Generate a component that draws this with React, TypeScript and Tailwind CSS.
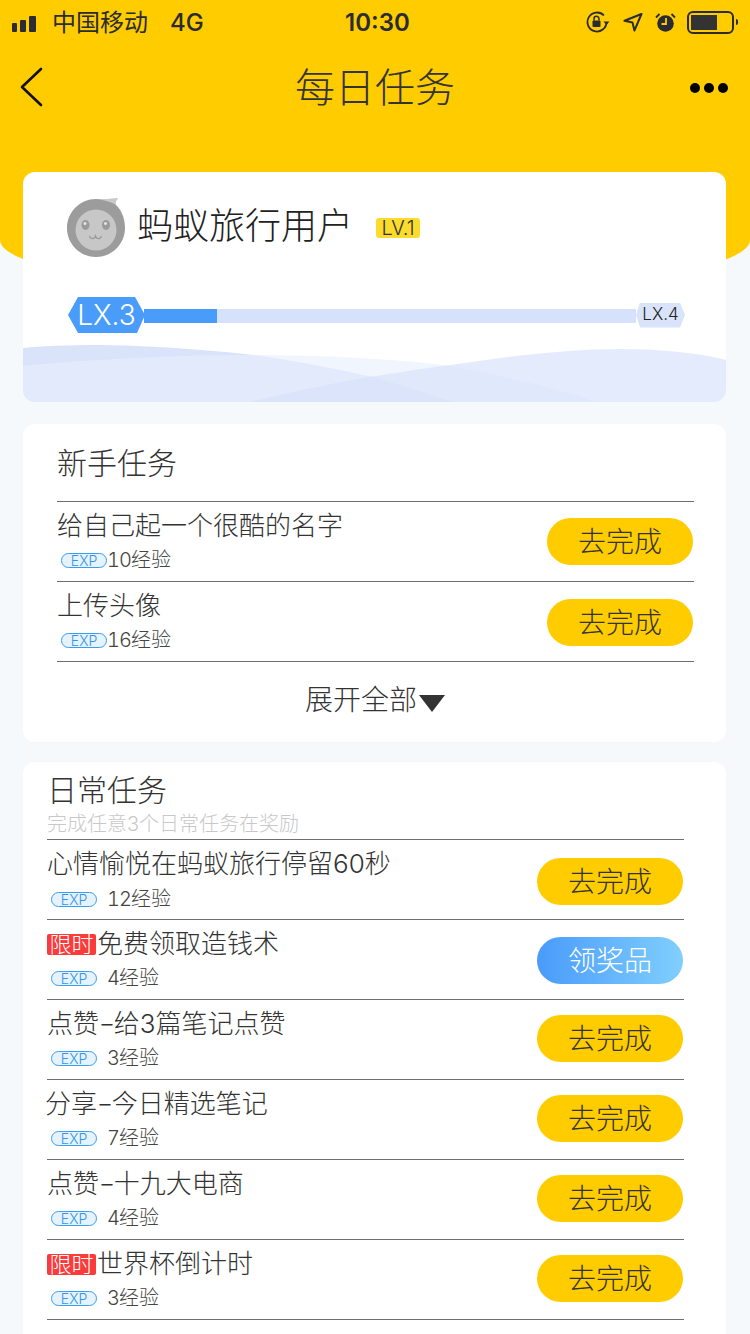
import React from "react";

const Hex = ({ className, children }: { className: string; children: React.ReactNode }) => (
  <div className={`flex items-center justify-center shrink-0 ${className}`}>{children}</div>
);

function StatusBar() {
  return (
    <div className="flex items-center h-[46px] pl-[12px] pr-[12px] text-[#2b2b33] relative">
      <div className="flex items-end gap-[3px] h-[16px] mt-[2px]">
        <div className="w-[5px] h-[9px] bg-[#2b2b33] rounded-[1px]" />
        <div className="w-[6px] h-[12px] bg-[#2b2b33] rounded-[1px]" />
        <div className="w-[7px] h-[16px] bg-[#2b2b33] rounded-[1px]" />
      </div>
      <span className="ml-[16px] text-[24px] leading-[30px] font-normal">中国移动</span>
      <span className="ml-[22px] text-[24px] leading-[30px] font-medium">4G</span>
      <span className="absolute left-[345px] top-[8px] text-[24px] leading-[30px] font-semibold">10:30</span>
      <div className="ml-auto flex items-center -mt-[2px]">
        <svg width="24" height="22" viewBox="0 0 24 22" fill="none" className="mr-[13px]">
          <path d="M20.500 11a9.500 9.500 0 1 1-2.600-6.500" stroke="#2b2b33" strokeWidth="1.800" />
          <path d="M23.500 10.500h-6l3 3.500z" fill="#2b2b33" />
          <rect x="6.500" y="9.500" width="8" height="6.500" rx="1" fill="#2b2b33" />
          <path d="M8 9.500V7.800a2.500 2.500 0 0 1 5 0v1.700" stroke="#2b2b33" strokeWidth="1.500" />
        </svg>
        <svg width="20" height="19" viewBox="0 0 20 19" fill="none" className="mr-[12px]">
          <path d="M18.500 1 1.500 7.800l8 1.600 1.900 8.200z" stroke="#2b2b33" strokeWidth="2" strokeLinejoin="round" />
        </svg>
        <svg width="21" height="19" viewBox="0 0 21 19" className="mr-[11px]">
          <circle cx="10.500" cy="10.500" r="8.300" fill="#2b2b33" />
          <path d="M1 4.500 4.500 1M20 4.500 16.500 1" stroke="#2b2b33" strokeWidth="1.800" />
          <path d="M11 5v6H6.500" stroke="#ffcc00" strokeWidth="1.800" fill="none" />
        </svg>
        <div className="w-[47px] h-[23px] border-[2px] border-[#2b2b33] rounded-[6px] p-[2px]">
          <div className="w-[26px] h-full bg-[#333]" />
        </div>
        <div className="w-[2px] h-[6px] ml-[2px] bg-[#2b2b33] rounded-r-[2px]" />
      </div>
    </div>
  );
}

function Avatar() {
  return (
    <svg width="60" height="60" viewBox="0 0 60 60" className="shrink-0">
      <path d="M30 1c7 0 15 0 22-.500-2 2-3 3-2.500 6C55 11 59 20 59 30c0 16-13 29-29 29S1 46 1 30 14 1 30 1z" fill="#9c9c9c" />
      <path d="M30 1c7 0 15 0 22-.500-2 2-3 3-2.500 6C44 3.500 37 2 30 1z" fill="#c9c9c9" />
      <circle cx="30" cy="32" r="20.500" fill="#c7c7c7" />
      <ellipse cx="19.500" cy="27" rx="4" ry="5" fill="#9a9a9a" />
      <ellipse cx="40" cy="27" rx="4" ry="5" fill="#9a9a9a" />
      <circle cx="19" cy="25.500" r="1.500" fill="#e6e6e6" />
      <circle cx="39.500" cy="25.500" r="1.500" fill="#e6e6e6" />
      <path d="M23.500 38c1 3.500 5 3.500 6 0 1 3.500 5 3.500 6 0" stroke="#9a9a9a" strokeWidth="1.200" fill="none" />
    </svg>
  );
}

function Waves() {
  return (
    <svg viewBox="0 0 703 60" width="703" height="60" className="absolute left-0 bottom-0">
      <path d="M0 6C30 3 60 3 80 3C130 4 190 8 230 13C270 18 320 28 350 35C380 43 410 54 430 60H0z" fill="#d9e4fb" />
      <path d="M0 24C70 17 150 13 230 13C300 13 370 17 420 23C480 33 540 48 574 60H0z" fill="#e8eefd" fillOpacity="0.6" />
      <path d="M227 60C280 47 350 33 420 24C480 15 540 7 600 7C640 7 675 11 703 18V60z" fill="#d7e1fa" fillOpacity="0.67" />
    </svg>
  );
}

function ExpPill() {
  return (
    <span className="w-[46px] h-[15px] rounded-full border border-[#3a9cf0] bg-[#e6f3fe] text-[#2f95ee] text-[14px] leading-[13px] font-light flex items-center justify-center shrink-0">
      EXP
    </span>
  );
}

function Button({ label = "去完成", blue = false, className = "" }: { label?: string; blue?: boolean; className?: string }) {
  return (
    <div
      className={`w-[146px] h-[47px] mr-[1px] rounded-full flex items-center justify-center text-[28px] font-light shrink-0 ${
        blue ? "bg-linear-to-r from-[#4a9bfa] to-[#80cffd] text-white" : "bg-[#ffcc00] text-[#333]"
      } ${className}`}
    >
      {label}
    </div>
  );
}

type Item = {
  title: React.ReactNode;
  exp: string;
  limited?: boolean;
  blue?: boolean;
  shift?: string;
  titleShift?: string;
  subTop?: string;
};

const Dash = () => <span className="inline-block mx-[1.500px] scale-x-[1.400]">-</span>;

function Row({ item, gap, subTop }: { item: Item; gap: string; subTop: string }) {
  return (
    <div className="h-[80px] border-b border-[#6e6e6e] flex items-start justify-between">
      <div className="flex flex-col">
        <div className={`flex items-center h-[46px] text-[26px] text-[#333] font-light ${item.titleShift ?? ""}`}>
          {item.limited && (
            <span className="w-[49px] h-[21px] mt-[3px] bg-[#fb3a3a] rounded-[2px] text-white text-[22px] leading-[21px] font-light flex items-center justify-center mr-[1px]">
              限时
            </span>
          )}
          <span>{item.title}</span>
        </div>
        <div className={`flex items-center h-[20px] ml-[4px] text-[20px] text-[#444] font-light tabular-nums ${item.subTop ?? subTop}`}>
          <ExpPill />
          <span className={gap}>
            <span className="tracking-[-1px]">{item.exp.slice(0, -2)}</span>
            {item.exp.slice(-2)}
          </span>
        </div>
      </div>
      <Button label={item.blue ? "领奖品" : "去完成"} blue={item.blue} className={item.shift ?? "mt-[17px]"} />
    </div>
  );
}

const daily: Item[] = [
  { title: "心情愉悦在蚂蚁旅行停留60秒", exp: "12经验", shift: "mt-[18px]", subTop: "mt-[3px]" },
  { title: "免费领取造钱术", exp: "4经验", limited: true, blue: true, shift: "mt-[17px]" },
  { title: <>点赞<Dash />给3篇笔记点赞</>, exp: "3经验", shift: "mt-[15px]" },
  { title: <>分享<Dash />今日精选笔记</>, exp: "7经验", shift: "mt-[15px]", titleShift: "-ml-[2px]" },
  { title: <>点赞<Dash />十九大电商</>, exp: "4经验", shift: "mt-[15px]" },
  { title: "世界杯倒计时", exp: "3经验", limited: true, shift: "mt-[15px]" },
];

export default function App() {
  return (
    <div className="w-[750px] h-[1334px] overflow-hidden bg-[#f5f9fc] font-['Inter','Noto_Sans_CJK_SC',sans-serif]">
      <header className="h-[295px] bg-[#ffcc00] rounded-b-[375px_55px]">
        <StatusBar />
        <div className="flex items-center justify-between h-[84px] pl-[19px] pr-[22px] relative">
          <svg width="24" height="40" viewBox="0 0 24 40" fill="none" className="-mt-[3px]">
            <path d="M22 2 3 20l19 18" stroke="#111" strokeWidth="2.600" strokeLinecap="round" strokeLinejoin="round" />
          </svg>
          <span className="text-[40px] leading-[50px] font-light text-[#333] absolute left-0 right-0 text-center">每日任务</span>
          <div className="flex gap-[4px]">
            <div className="w-[10px] h-[10px] rounded-full bg-black" />
            <div className="w-[10px] h-[10px] rounded-full bg-black" />
            <div className="w-[10px] h-[10px] rounded-full bg-black" />
          </div>
        </div>
      </header>

      <main className="-mt-[123px] pl-[23px] pr-[24px] flex flex-col">
        <section className="h-[230px] bg-white rounded-[12px] relative overflow-hidden">
          <Waves />
          <div className="relative flex items-center pt-[26px] pl-[43px]">
            <Avatar />
            <span className="ml-[11px] mb-[4px] text-[36px] leading-[52px] font-light text-[#222]">蚂蚁旅行用户</span>
            <span className="ml-[23px] w-[44px] h-[20px] rounded-[3px] bg-[#fbdc2c] text-[#333] text-[20px] leading-[20px] font-light flex items-center justify-center">
              LV.1
            </span>
          </div>
          <div className="relative flex items-center mt-[41px] pl-[45px] pr-[41px]">
            <Hex className="w-[77px] h-[36px] -mt-[2px] bg-[#4a9cfa] text-white text-[28px] font-light [clip-path:polygon(0_50%,10px_0,67px_0,77px_50%,69px_100%,10px_100%)]">
              LX.3
            </Hex>
            <div className="w-[73px] h-[14px] bg-[#4a9cfa] -ml-[1px]" />
            <div className="flex-1 h-[14px] bg-[#d6e2fb]" />
            <Hex className="w-[49px] h-[25px] -mt-[2px] bg-[#d9e4fb] text-[#222] text-[17px] font-light [clip-path:polygon(0_50%,4px_0,44px_0,49px_50%,44px_100%,4px_100%)]">
              LX.4
            </Hex>
          </div>
        </section>

        <section className="mt-[22px] h-[318px] bg-white rounded-[12px] pl-[34px] pr-[32px]">
          <div className="h-[78px] border-b border-[#6e6e6e] text-[30px] leading-[78px] font-light text-[#333]">新手任务</div>
          <Row item={{ title: "给自己起一个很酷的名字", exp: "10经验", shift: "mt-[16px]" }} gap="ml-0" subTop="mt-[2px]" />
          <Row item={{ title: "上传头像", exp: "16经验", shift: "mt-[17px]" }} gap="ml-0" subTop="mt-[2px]" />
          <div className="flex items-center justify-center h-[76px] text-[28px] font-light text-[#333] pr-[1px]">
            <span>展开全部</span>
            <svg width="26" height="17" viewBox="0 0 26 17" className="ml-[2px] mt-[7px]">
              <path d="M0 0h26L13 17z" fill="#333" />
            </svg>
          </div>
        </section>

        <section className="mt-[20px] h-[600px] bg-white rounded-[12px] pl-[24px] pr-[42px]">
          <div className="h-[78px] border-b border-[#6e6e6e]">
            <div className="pt-[8px] text-[30px] leading-[40px] font-light text-[#333]">日常任务</div>
            <div className="mt-[2px] text-[20px] leading-[24px] font-light text-[#c8c8c8]">完成任意3个日常任务在奖励</div>
          </div>
          {daily.map((item) => (
            <Row key={item.exp + String(item.shift) + String(item.blue) + String(item.limited) + String(item.titleShift)} item={item} gap="ml-[10px]" subTop="mt-[2px]" />
          ))}
        </section>
      </main>
    </div>
  );
}
